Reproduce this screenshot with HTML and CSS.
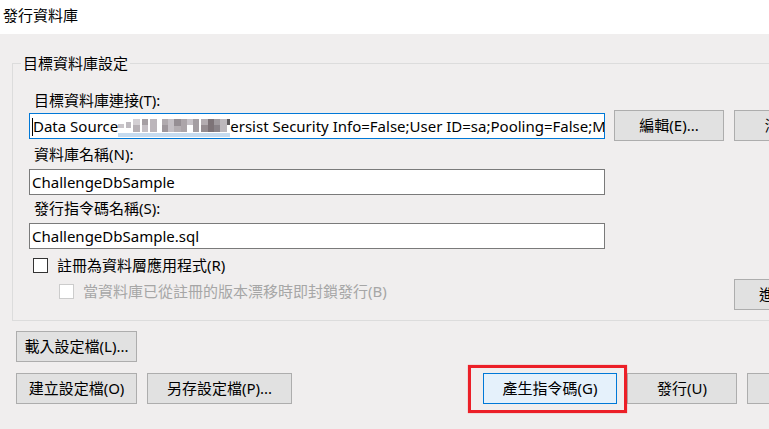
FILE: index.html
```html
<!DOCTYPE html>
<html lang="zh-Hant">
<head>
<meta charset="utf-8">
<title>發行資料庫</title>
<link rel="stylesheet" href="styles.css">
</head>
<body>
<div class="window">
  <div class="titlebar">發行資料庫</div>
  <div class="client">
    <fieldset class="group">
      <legend>目標資料庫設定</legend>
      <div class="group-body">
        <div class="field-label first">目標資料庫連接(T):</div>
        <div class="conn-row">
          <div class="textbox focused"><span class="caret"></span>Data Source<span class="redact"><svg width="112" height="22" viewBox="0 0 112 22"><rect x="0" y="8" width="6" height="4" fill="#c9c5c9"/><rect x="8" y="6" width="5" height="6" fill="#bfbbc0"/><rect x="15" y="3" width="7" height="6" fill="#d3cfd3"/><rect x="15" y="9" width="7" height="7" fill="#b6b0b5"/><rect x="24" y="3" width="6" height="6" fill="#a59fa3"/><rect x="24" y="9" width="6" height="7" fill="#c6c1c6"/><rect x="32" y="3" width="7" height="13" fill="#bcb6bb"/><rect x="44" y="3" width="6" height="6" fill="#b0aaae"/><rect x="44" y="9" width="6" height="7" fill="#9e979c"/><rect x="50" y="3" width="6" height="13" fill="#c4bfc4"/><rect x="56" y="3" width="7" height="7" fill="#968f94"/><rect x="56" y="10" width="7" height="6" fill="#b4aeb2"/><rect x="63" y="3" width="6" height="13" fill="#aca5a9"/><rect x="69" y="3" width="6" height="6" fill="#c7c2c7"/><rect x="75" y="3" width="6" height="13" fill="#a49ea2"/><rect x="83" y="3" width="7" height="6" fill="#b3acb0"/><rect x="83" y="9" width="7" height="7" fill="#958c90"/><rect x="90" y="3" width="6" height="13" fill="#7d7377"/><rect x="96" y="3" width="6" height="6" fill="#a09a9e"/><rect x="96" y="9" width="6" height="7" fill="#8a8388"/><rect x="102" y="3" width="7" height="13" fill="#bdb8bd"/><rect x="109" y="3" width="3" height="6" fill="#5f5b5e"/><rect x="0" y="17" width="112" height="4" fill="#c6dbef"/></svg></span>ersist Security Info=False;User ID=sa;Pooling=False;MultipleActiveResultSets=False</div>
          <button class="btn side">編輯(E)...</button>
          <button class="btn side">清除(C)</button>
        </div>
        <div class="field-label">資料庫名稱(N):</div>
        <div class="textbox spaced">ChallengeDbSample</div>
        <div class="field-label">發行指令碼名稱(S):</div>
        <div class="textbox spaced">ChallengeDbSample.sql</div>
        <label class="check-row">
          <span class="checkbox"></span>
          <span>註冊為資料層應用程式(R)</span>
        </label>
        <div class="option-row">
          <label class="check-row sub disabled">
            <span class="checkbox"></span>
            <span>當資料庫已從註冊的版本漂移時即封鎖發行(B)</span>
          </label>
          <button class="btn side advanced">進階(V)...</button>
        </div>
      </div>
    </fieldset>
    <div class="actions">
      <div class="action-row">
        <button class="btn load">載入設定檔(L)...</button>
      </div>
      <div class="action-row second">
        <button class="btn create">建立設定檔(O)</button>
        <button class="btn saveas">另存設定檔(P)...</button>
        <span class="highlight"><button class="btn primary">產生指令碼(G)</button></span>
        <button class="btn side">發行(U)</button>
        <button class="btn side">取消</button>
      </div>
    </div>
  </div>
</div>
</body>
</html>
```
FILE: styles.css
```css
html, body {
  margin: 0;
  padding: 0;
  width: 769px;
  height: 429px;
  overflow: hidden;
  background: #f0eeee;
}

body {
  font-family: "Noto Sans", "Noto Sans CJK TC", sans-serif;
  font-size: 15px;
  line-height: 20px;
  color: #000;
}

.window {
  width: 880px;
}

.titlebar {
  background: #ffffff;
  height: 34px;
  box-sizing: border-box;
  padding: 5px 0 0 3px;
  line-height: 20px;
}

.client {
  background: #f0eeee;
  padding-top: 19px;
  height: 376px;
}

.group {
  margin: 0 0 0 12px;
  padding: 0;
  border: 1px solid #dcdcdc;
  min-width: 0;
}

.group legend {
  margin-left: 8px;
  padding: 0 2px;
  line-height: 20px;
}

.group-body {
  padding: 17px 0 10px 16px;
}

.field-label {
  padding-left: 5px;
  margin-top: 3px;
  height: 20px;
}

.field-label.first {
  margin-top: 0;
}

.conn-row {
  display: flex;
  align-items: center;
  height: 31px;
}

.textbox {
  box-sizing: border-box;
  width: 576px;
  height: 26px;
  border: 1px solid #7a7a7a;
  background: #ffffff;
  padding: 0 2px;
  line-height: 24px;
  white-space: nowrap;
  overflow: hidden;
  flex: none;
}

.textbox.spaced {
  margin-top: 5px;
}

.textbox.focused {
  border-color: #0078d7;
}

.caret {
  display: inline-block;
  width: 1px;
  height: 18px;
  background: #000;
  vertical-align: -4px;
}

.redact {
  display: inline-block;
  width: 112px;
  height: 22px;
  vertical-align: -6px;
}

.redact svg {
  display: block;
}

.btn {
  font: inherit;
  color: #000;
  box-sizing: border-box;
  height: 31px;
  border: 1px solid #adadad;
  background: #e1e1e1;
  padding: 0;
  margin: 0;
  line-height: 29px;
  text-align: center;
  flex: none;
  white-space: nowrap;
}

.btn.side {
  width: 110px;
  margin-left: 10px;
}

.conn-row .btn.side:first-of-type {
  margin-left: 9px;
}

.check-row {
  display: flex;
  align-items: center;
  height: 20px;
  margin-top: 6px;
  padding-left: 4px;
}

.checkbox {
  box-sizing: border-box;
  width: 15px;
  height: 15px;
  border: 1px solid #333333;
  background: #ffffff;
  margin-right: 9px;
  flex: none;
}

.check-row.sub {
  padding-left: 30px;
}

.check-row.disabled {
  color: #a6a6a6;
}

.check-row.disabled .checkbox {
  border-color: #cccccc;
}

.option-row {
  display: flex;
  align-items: flex-start;
}

.option-row .check-row {
  width: 705px;
  box-sizing: border-box;
  flex: none;
}

.btn.advanced {
  margin-left: 0;
  margin-top: 4px;
}

.actions {
  padding: 10px 0 0 16px;
}

.action-row {
  display: flex;
  align-items: center;
}

.action-row.second {
  margin-top: 11px;
}

.btn.load,
.btn.create {
  width: 121px;
}

.btn.saveas {
  width: 145px;
  margin-left: 10px;
}

.highlight {
  position: relative;
  margin-left: 191px;
  display: flex;
}

.highlight::after {
  content: "";
  position: absolute;
  left: -15px;
  top: -8px;
  right: -10px;
  bottom: -9px;
  border: 3px solid #ec1f27;
  box-shadow: 0 0 1px rgba(236, 31, 39, 0.6);
  pointer-events: none;
}

.btn.primary {
  width: 134px;
  background: #e5f1fb;
  border-color: #0078d7;
}
```
